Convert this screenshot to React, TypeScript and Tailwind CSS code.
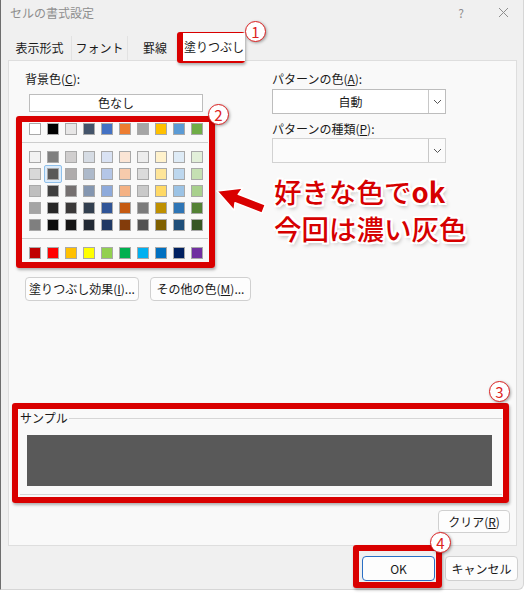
import type { ReactNode } from "react";

const THEME_TOP = ["#FFFFFF", "#000000", "#E7E6E6", "#44546A", "#4472C4", "#ED7D31", "#A5A5A5", "#FFC000", "#5B9BD5", "#70AD47"];

const THEME_SHADES = [
  ["#F2F2F2", "#7F7F7F", "#D0CECE", "#D6DCE4", "#D9E2F3", "#FBE5D5", "#EDEDED", "#FFF2CC", "#DEEBF6", "#E2EFD9"],
  ["#D8D8D8", "#595959", "#AEABAB", "#ADB9CA", "#B4C6E7", "#F7CBAC", "#DBDBDB", "#FEE599", "#BDD7EE", "#C5E0B3"],
  ["#BFBFBF", "#3F3F3F", "#757070", "#8496B0", "#8EAADB", "#F4B183", "#C9C9C9", "#FFD965", "#9CC3E5", "#A8D08D"],
  ["#A5A5A5", "#262626", "#3A3838", "#323F4F", "#2F5496", "#C55A11", "#7B7B7B", "#BF9000", "#2E75B5", "#538135"],
  ["#7F7F7F", "#0C0C0C", "#171616", "#222A35", "#1F3864", "#833C0B", "#525252", "#7F6000", "#1E4E79", "#375623"],
];

const STANDARD = ["#C00000", "#FF0000", "#FFC000", "#FFFF00", "#92D050", "#00B050", "#00B0F0", "#0070C0", "#002060", "#7030A0"];

const TABS = [
  { label: "表示形式", width: "w-[64px]" },
  { label: "フォント", width: "w-[56px]" },
  { label: "罫線", width: "w-[55px]" },
];

function Swatch({ color, selected }: { color: string; selected?: boolean }) {
  return (
    <div className="relative h-[12px] w-[12px]">
      {selected && (
        <div className="absolute -inset-[3px] rounded-[2px] border border-[#8fc0ea] bg-[#dcebfa]" />
      )}
      <div
        className="relative h-[12px] w-[12px] border border-[#a9a9a9]"
        style={{ backgroundColor: color }}
      />
    </div>
  );
}

function SwatchRow({ colors, selectedIndex }: { colors: string[]; selectedIndex?: number }) {
  return (
    <div className="flex gap-[6px]">
      {colors.map((color, index) => (
        <Swatch key={color + index} color={color} selected={index === selectedIndex} />
      ))}
    </div>
  );
}

function Chevron() {
  return (
    <svg width="9" height="6" viewBox="0 0 9 6">
      <polyline points="1,1 4.5,4.5 8,1" fill="none" stroke="#555" strokeWidth="1" />
    </svg>
  );
}

function Dropdown({ value, disabled }: { value?: string; disabled?: boolean }) {
  return (
    <div
      className={`flex h-[25px] w-[174px] border ${
        disabled ? "border-[#d2d2d2] bg-[#fbfbfb]" : "border-[#bdbdbd] bg-white"
      }`}
    >
      <div className="flex flex-1 items-center justify-center text-[12px] text-[#1a1a1a]">{value}</div>
      <div className="flex w-[17px] items-center justify-center border-l border-[#c8c8c8]">
        <Chevron />
      </div>
    </div>
  );
}

function WinButton({ children, className }: { children: ReactNode; className: string }) {
  return (
    <div
      className={`flex items-center justify-center rounded-[4px] border bg-[#fdfdfd] text-[12px] text-[#1a1a1a] ${className}`}
    >
      {children}
    </div>
  );
}

function RedBox({ className }: { className: string }) {
  return (
    <div
      className={`absolute rounded-[3px] border-[6px] border-[#d90000] shadow-[1px_2px_3px_rgba(0,0,0,0.3)] ${className}`}
    />
  );
}

function Marker({ n, className }: { n: string; className: string }) {
  return (
    <div
      className={`absolute flex h-[21px] w-[21px] items-center justify-center rounded-full border border-[#d22] bg-white text-[15px] leading-none text-[#d22] shadow-[1px_1px_3px_rgba(0,0,0,0.35)] ${className}`}
    >
      {n}
    </div>
  );
}

export default function App() {
  return (
    <div className="relative h-[593px] w-[530px] overflow-hidden bg-white font-['Noto_Sans_CJK_JP','Noto_Sans',sans-serif]">
      <div className="flex h-[590px] w-[524px] flex-col rounded-br-[6px] border-r border-b border-l border-r-[#d6d6d6] border-b-[#d6d6d6] border-l-[#6e6e6e] bg-[#f0f0f0]">
        {/* title bar */}
        <div className="flex h-[25px] items-center pl-[9px] pr-[14px] text-[12px] text-[#8e8e8e]">
          <span>セルの書式設定</span>
          <span className="ml-auto mr-[34px] text-[12px]">?</span>
          <svg width="11" height="11" viewBox="0 0 11 11">
            <path d="M1 1 L10 10 M10 1 L1 10" stroke="#8e8e8e" strokeWidth="1" />
          </svg>
        </div>

        {/* tabs */}
        <div className="mt-[8px] flex h-[27px] items-end pl-[7px]">
          {TABS.map((tab) => (
            <div
              key={tab.label}
              className={`flex h-[24px] items-center justify-center border-r border-[#e2e2e2] text-[12px] text-[#1a1a1a] ${tab.width}`}
            >
              {tab.label}
            </div>
          ))}
          <div className="relative z-10 -mb-px flex h-[28px] w-[62px] items-center justify-center bg-white text-[12px] text-[#1a1a1a]">
            塗りつぶし
          </div>
        </div>

        {/* panel */}
        <div className="ml-[7px] flex h-[486px] w-[509px] flex-col border border-[#dedede] bg-[#f9f9f9]">
          <div className="flex pl-[16px] pt-[10px]">
            <div className="flex w-[247px] flex-col">
              <div className="h-[16px] text-[12px] leading-[16px] text-[#1a1a1a]">
                背景色(<span className="underline">C</span>):
              </div>
              <div className="ml-[4px] mt-[7px] flex h-[18px] w-[174px] items-center justify-center border border-[#bdbdbd] bg-white text-[12px] text-[#1a1a1a]">
                色なし
              </div>
              <div className="mt-[11px] pl-[4px]">
                <SwatchRow colors={THEME_TOP} />
              </div>
              <div className="ml-[-3px] mt-[7px] h-px w-[186px] bg-[#cdcdcd]" />
              <div className="mt-[8px] flex flex-col gap-[5px] pl-[4px]">
                {THEME_SHADES.map((row, index) => (
                  <SwatchRow key={index} colors={row} selectedIndex={index === 1 ? 1 : undefined} />
                ))}
              </div>
              <div className="ml-[-3px] mt-[7px] h-px w-[186px] bg-[#cdcdcd]" />
              <div className="mt-[8px] pl-[4px]">
                <SwatchRow colors={STANDARD} />
              </div>
              <div className="mt-[18px] flex gap-[11px]">
                <WinButton className="h-[24px] w-[114px] border-[#d0d0d0]">
                  塗りつぶし効果(<span className="underline">I</span>)...
                </WinButton>
                <WinButton className="h-[24px] w-[101px] border-[#d0d0d0]">
                  その他の色(<span className="underline">M</span>)...
                </WinButton>
              </div>
            </div>

            <div className="flex flex-col">
              <div className="h-[16px] text-[12px] leading-[16px] text-[#1a1a1a]">
                パターンの色(<span className="underline">A</span>):
              </div>
              <div className="mt-[2px]">
                <Dropdown value="自動" />
              </div>
              <div className="mt-[7px] h-[16px] text-[12px] leading-[16px] text-[#1a1a1a]">
                パターンの種類(<span className="underline">P</span>):
              </div>
              <div className="mt-px">
                <Dropdown disabled />
              </div>
            </div>
          </div>

          {/* sample group */}
          <div className="relative ml-[11px] mt-[117px] w-[482px] border-t border-b border-[#d6d6d6] pb-[8px] pl-[7px] pr-[10px] pt-[16px]">
            <span className="absolute -top-[9px] left-0 bg-[#f9f9f9] pr-px text-[12px] leading-[16px] text-[#1a1a1a]">
              サンプル
            </span>
            <div className="h-[51px] bg-[#595959]" />
          </div>

          <div className="mr-[6px] mt-[15px] flex justify-end">
            <WinButton className="h-[23px] w-[72px] border-[#d0d0d0]">
              クリア(<span className="underline">R</span>)
            </WinButton>
          </div>
        </div>

        {/* dialog buttons */}
        <div className="mr-[5px] mt-[10px] flex justify-end gap-[10px]">
          <WinButton className="h-[25px] w-[73px] border-[#2a6fc4]">OK</WinButton>
          <WinButton className="h-[25px] w-[73px] border-[#d0d0d0]">キャンセル</WinButton>
        </div>
      </div>

      {/* annotations */}
      <RedBox className="left-[177px] top-[32px] h-[31px] w-[68px]" />
      <RedBox className="left-[16px] top-[116px] h-[152px] w-[199px]" />
      <RedBox className="left-[12px] top-[403px] h-[100px] w-[497px]" />
      <RedBox className="left-[353px] top-[545px] h-[43px] w-[89px]" />

      <svg className="absolute left-[200px] top-[170px]" width="80" height="60" viewBox="0 0 80 60">
        <g transform="translate(17 21) rotate(21)">
          <polygon
            points="0,0 23,-12 21,-4.5 50,-4.5 50,4.5 21,4.5 23,12"
            fill="#d90000"
            stroke="#fff"
            strokeWidth="1.5"
            strokeLinejoin="round"
          />
        </g>
      </svg>

      <div className="absolute left-[274px] top-[173px] text-[27.5px] font-medium leading-[37px] whitespace-nowrap text-[#d60000] [text-shadow:-2px_-2px_0_#fff,2px_-2px_0_#fff,-2px_2px_0_#fff,2px_2px_0_#fff,0_2px_0_#fff,0_-2px_0_#fff,2px_0_0_#fff,-2px_0_0_#fff,2px_3px_4px_rgba(0,0,0,0.35)]">
        <div>
          好きな色で<span className="font-bold">ok</span>
        </div>
        <div>今回は濃い灰色</div>
      </div>

      <Marker n="1" className="left-[245px] top-[21px]" />
      <Marker n="2" className="left-[208px] top-[104px]" />
      <Marker n="3" className="left-[489px] top-[381px]" />
      <Marker n="4" className="left-[430px] top-[532px]" />
    </div>
  );
}
